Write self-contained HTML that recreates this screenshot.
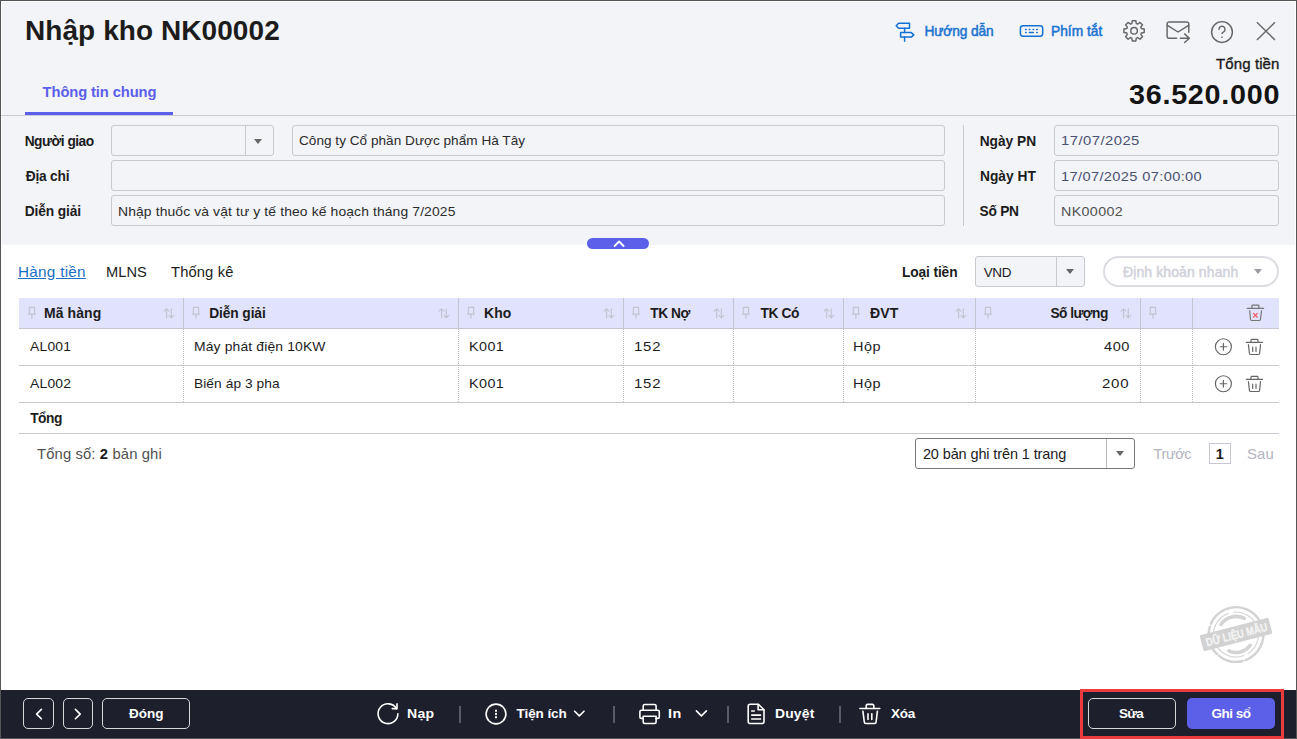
<!DOCTYPE html>
<html><head><meta charset="utf-8">
<style>
*{box-sizing:border-box;margin:0;padding:0}
html,body{width:1297px;height:739px;overflow:hidden;background:#fff}
body{font-family:"Liberation Sans",sans-serif;color:#212121;position:relative}
.a{position:absolute;white-space:nowrap;line-height:1.2}
.s{position:absolute}
#win{position:absolute;left:0;top:0;width:1297px;height:739px;border:1px solid #555;}
#top{position:absolute;left:1px;top:1px;width:1295px;height:244px;background:#f3f4f8}
.inp{position:absolute;border:1px solid #c8c9d1;border-radius:3px;background:#f3f4f8}
.tri{position:absolute;width:0;height:0;border-left:4.5px solid transparent;border-right:4.5px solid transparent;border-top:5.5px solid #666}
.hd{position:absolute;top:298px;height:31px;background:#e1e2fb;border-bottom:1px solid #c6c7cf}
.vs{position:absolute;width:1px;background:#c8c9d1}
.ds{position:absolute;width:0;border-left:1px dotted #bbb}
.hl{position:absolute;height:1px;background:#c8c9d1}
#bar{position:absolute;left:1px;top:690px;width:1295px;height:48px;background:#1e1f2d}
.bb{position:absolute;border:1px solid #d8d8d8;border-radius:5px}
.sep{position:absolute;width:2px;height:17px;top:706px;background:#5a5b66}
svg{position:absolute;overflow:visible}

</style></head><body>
<div id="top"></div>
<div id="win"></div>
<div class="s" style="left:1px;top:1px;width:1295px;height:1px;background:#fff"></div>
<div class="s" style="left:1px;top:1px;width:1px;height:244px;background:#fff"></div>
<div class="s" style="left:1295px;top:1px;width:1px;height:689px;background:#fff"></div>
<div class="s" style="left:25px;top:112px;width:148px;height:3px;background:#5b5fe9"></div>
<div class="s" style="left:1px;top:115px;width:1295px;height:1px;background:#c9cad2"></div>
<!-- form -->
<div class="inp" style="left:111px;top:125px;width:163px;height:31px"></div>
<div class="vs" style="left:245px;top:126px;height:29px"></div>
<div class="tri" style="left:254px;top:139px"></div>
<div class="inp" style="left:292px;top:125px;width:653px;height:31px"></div>
<div class="inp" style="left:111px;top:160px;width:834px;height:31px"></div>
<div class="inp" style="left:111px;top:195px;width:834px;height:31px"></div>
<div class="vs" style="left:963px;top:125px;height:101px"></div>
<div class="inp" style="left:1054px;top:125px;width:225px;height:31px"></div>
<div class="inp" style="left:1054px;top:160px;width:225px;height:31px"></div>
<div class="inp" style="left:1054px;top:195px;width:225px;height:31px"></div>
<div class="s" style="left:587px;top:238px;width:62px;height:11px;background:#5b5fe9;border-radius:5.5px"></div>
<!-- tabs row -->
<div class="inp" style="left:975px;top:256px;width:110px;height:31px"></div>
<div class="vs" style="left:1056px;top:257px;height:29px"></div>
<div class="tri" style="left:1065.5px;top:269px"></div>
<div class="s" style="left:1103px;top:256px;width:176px;height:31px;border:2px solid #dcdde3;border-radius:16px"></div>
<div class="tri" style="left:1253.5px;top:269px;border-top-color:#9c9da3"></div>
<!-- table -->
<div class="hd" style="left:19px;width:1260px"></div>
<div class="vs" style="left:183px;top:298px;height:30px;background:#c4c5d2"></div>
<div class="vs" style="left:458px;top:298px;height:30px;background:#c4c5d2"></div>
<div class="vs" style="left:623px;top:298px;height:30px;background:#c4c5d2"></div>
<div class="vs" style="left:733px;top:298px;height:30px;background:#c4c5d2"></div>
<div class="vs" style="left:843px;top:298px;height:30px;background:#c4c5d2"></div>
<div class="vs" style="left:975px;top:298px;height:30px;background:#c4c5d2"></div>
<div class="vs" style="left:1140px;top:298px;height:30px;background:#c4c5d2"></div>
<div class="vs" style="left:1192px;top:298px;height:30px;background:#c4c5d2"></div>
<div class="hl" style="left:19px;top:365px;width:1260px"></div>
<div class="hl" style="left:19px;top:402px;width:1260px"></div>
<div class="hl" style="left:19px;top:433px;width:1260px"></div>
<div class="ds" style="left:183px;top:329px;height:73px"></div>
<div class="ds" style="left:458px;top:329px;height:73px"></div>
<div class="ds" style="left:623px;top:329px;height:73px"></div>
<div class="ds" style="left:733px;top:329px;height:73px"></div>
<div class="ds" style="left:843px;top:329px;height:73px"></div>
<div class="ds" style="left:975px;top:329px;height:73px"></div>
<div class="ds" style="left:1140px;top:329px;height:73px"></div>
<div class="ds" style="left:1192px;top:329px;height:73px"></div>
<!-- footer -->
<div class="s" style="left:915px;top:438px;width:220px;height:31px;border:1px solid #777;border-radius:3px"></div>
<div class="vs" style="left:1106px;top:439px;height:29px;background:#bbb"></div>
<div class="tri" style="left:1116px;top:451px"></div>
<div class="s" style="left:1209px;top:443px;width:22px;height:21px;border:1px solid #c6c7d3"></div>
<!-- bottom bar -->
<div id="bar"></div>
<div class="bb" style="left:23px;top:698px;width:31px;height:31px"></div>
<div class="bb" style="left:63px;top:698px;width:30px;height:31px"></div>
<div class="bb" style="left:102px;top:698px;width:88px;height:31px"></div>
<div class="sep" style="left:459px"></div>
<div class="sep" style="left:613px"></div>
<div class="sep" style="left:727px"></div>
<div class="sep" style="left:839px"></div>
<div class="s" style="left:1080px;top:689px;width:204px;height:50px;border:3px solid #ec3b3d"></div>
<div class="bb" style="left:1088px;top:698px;width:88px;height:31px"></div>
<div class="s" style="left:1187px;top:698px;width:88px;height:31px;background:#5c5fe8;border-radius:5px"></div>
<!-- ICONS -->
<svg width="1297" height="739" style="left:0;top:0" viewBox="0 0 1297 739" fill="none" stroke-linecap="round" stroke-linejoin="round">
 <!-- signpost -->
 <g stroke="#1272d3" stroke-width="1.5">
  <path d="M898.6 23.3H909.5V28.2H898.6L896.2 25.75Z"/>
  <path d="M904.6 28.2V32.6M904.6 37.1V41.3"/>
  <path d="M900.6 32.6H911.3L913.8 34.85L911.3 37.1H900.6Z"/>
 </g>
 <!-- keyboard -->
 <g stroke="#1272d3">
  <rect x="1020.4" y="25.65" width="22.3" height="10.55" rx="2.6" stroke-width="1.5"/>
  <path d="M1025.6 29.5h0.6M1029.3 29.5h0.6M1033 29.5h0.6M1036.7 29.5h0.6M1025.6 32.5h0.6M1029.3 32.5h4M1036.7 32.5h0.6" stroke-width="1.4"/>
 </g>
 <!-- gear -->
 <g stroke="#666" stroke-width="1.45" transform="translate(1134.06 30.8)">
  <path d="M-2.91 -7.02 L-2.25 -7.26 L-1.74 -10.15 L1.74 -10.15 L2.25 -7.26 L2.91 -7.02 L3.55 -6.72 L5.95 -8.41 L8.41 -5.95 L6.72 -3.55 L7.02 -2.91 L7.26 -2.25 L10.15 -1.74 L10.15 1.74 L7.26 2.25 L7.02 2.91 L6.72 3.55 L8.41 5.95 L5.95 8.41 L3.55 6.72 L2.91 7.02 L2.25 7.26 L1.74 10.15 L-1.74 10.15 L-2.25 7.26 L-2.91 7.02 L-3.55 6.72 L-5.95 8.41 L-8.41 5.95 L-6.72 3.55 L-7.02 2.91 L-7.26 2.25 L-10.15 1.74 L-10.15 -1.74 L-7.26 -2.25 L-7.02 -2.91 L-6.72 -3.55 L-8.41 -5.95 L-5.95 -8.41 L-3.55 -6.72Z"/>
  <circle r="3.3"/>
 </g>
 <!-- mail -->
 <g stroke="#666" stroke-width="1.45">
  <path d="M1188.8 32.3V24A2 2 0 0 0 1186.8 21.9H1169.1A2 2 0 0 0 1167.1 24V36.2A2 2 0 0 0 1169.1 38.2H1176.6"/>
  <path d="M1167.4 25.3L1178 32L1188.6 25.3"/>
  <path d="M1180.3 38.2H1189.4M1184.6 33.9L1189.4 38.2L1184.6 42.5"/>
 </g>
 <!-- help -->
 <g stroke="#666" stroke-width="1.45">
  <circle cx="1222" cy="32" r="10.4"/>
  <path d="M1219 29.3A3 3 0 1 1 1223.6 31.8C1222.6 32.4 1222 32.9 1222 33.6"/>
  <path d="M1221.9 37.3h0.2" stroke-width="1.6"/>
 </g>
 <!-- close -->
 <path d="M1256.9 22.3L1275 40M1275 22.3L1256.9 40" stroke="#6b6b6b" stroke-width="1.5" stroke-linecap="butt"/>
 <!-- collapse chevron -->
 <path d="M614.6 246L619.1 241.5L623.6 246" stroke="#fff" stroke-width="1.8"/>
 <!-- header pins & sorts -->
 <g stroke="#c2c3cf" stroke-width="1.1"><path d="M29.3 313.9V307.9A0.5 0.5 0 0 1 29.8 307.4H34.1 A0.5 0.5 0 0 1 34.6 307.9V313.9M28.5 314.1H35.4M31.9 314.1V318.3"/><path d="M193.3 313.9V307.9A0.5 0.5 0 0 1 193.8 307.4H198.1 A0.5 0.5 0 0 1 198.6 307.9V313.9M192.5 314.1H199.4M196.0 314.1V318.3"/><path d="M468.3 313.9V307.9A0.5 0.5 0 0 1 468.8 307.4H473.1 A0.5 0.5 0 0 1 473.6 307.9V313.9M467.5 314.1H474.4M470.9 314.1V318.3"/><path d="M633.3 313.9V307.9A0.5 0.5 0 0 1 633.8 307.4H638.1 A0.5 0.5 0 0 1 638.6 307.9V313.9M632.5 314.1H639.4M635.9 314.1V318.3"/><path d="M743.3 313.9V307.9A0.5 0.5 0 0 1 743.8 307.4H748.1 A0.5 0.5 0 0 1 748.6 307.9V313.9M742.5 314.1H749.4M745.9 314.1V318.3"/><path d="M853.3 313.9V307.9A0.5 0.5 0 0 1 853.8 307.4H858.1 A0.5 0.5 0 0 1 858.6 307.9V313.9M852.5 314.1H859.4M855.9 314.1V318.3"/><path d="M985.3 313.9V307.9A0.5 0.5 0 0 1 985.8 307.4H990.1 A0.5 0.5 0 0 1 990.6 307.9V313.9M984.5 314.1H991.4M987.9 314.1V318.3"/><path d="M1150.3 313.9V307.9A0.5 0.5 0 0 1 1150.8 307.4H1155.1 A0.5 0.5 0 0 1 1155.6 307.9V313.9M1149.5 314.1H1156.4M1153.0 314.1V318.3"/><path d="M166.6 317.8V308.8M164.2 311.2L166.6 308.8L169.0 311.2M171.3 308.8V317.8M168.9 315.4L171.3 317.8L173.7 315.4"/><path d="M441.6 317.8V308.8M439.2 311.2L441.6 308.8L444.0 311.2M446.3 308.8V317.8M443.9 315.4L446.3 317.8L448.7 315.4"/><path d="M606.6 317.8V308.8M604.2 311.2L606.6 308.8L609.0 311.2M611.3 308.8V317.8M608.9 315.4L611.3 317.8L613.7 315.4"/><path d="M716.6 317.8V308.8M714.2 311.2L716.6 308.8L719.0 311.2M721.3 308.8V317.8M718.9 315.4L721.3 317.8L723.7 315.4"/><path d="M826.6 317.8V308.8M824.2 311.2L826.6 308.8L829.0 311.2M831.3 308.8V317.8M828.9 315.4L831.3 317.8L833.7 315.4"/><path d="M958.6 317.8V308.8M956.2 311.2L958.6 308.8L961.0 311.2M963.3 308.8V317.8M960.9 315.4L963.3 317.8L965.7 315.4"/><path d="M1123.6 317.8V308.8M1121.2 311.2L1123.6 308.8L1126.0 311.2M1128.3 308.8V317.8M1125.9 315.4L1128.3 317.8L1130.7 315.4"/></g>
 <!-- header trash -->
 <g stroke="#777" stroke-width="1.2">
  <path d="M1247.3 308.4H1263.6"/>
  <path d="M1251.9 308.2V306A0.8 0.8 0 0 1 1252.7 305.2H1258.1A0.8 0.8 0 0 1 1258.9 306V308.2"/>
  <path d="M1249.7 310.8L1250.5 319.3A1.2 1.2 0 0 0 1251.7 320.5H1259.3A1.2 1.2 0 0 0 1260.5 319.3L1261.5 310.8"/>
 </g>
 <path d="M1253.2 313.1L1257.6 317.5M1257.6 313.1L1253.2 317.5" stroke="#f2545c" stroke-width="1.15" stroke-linecap="butt"/>
 <!-- row icons -->
 <g stroke="#666" stroke-width="1.2"><circle cx="1223.4" cy="346.75" r="8"/><path d="M1223.4 343.45v6.6M1220.1 346.75h6.6"/><path d="M1246.3 342.4H1262.5M1251 342.3V340.2A0.8 0.8 0 0 1 1251.8 339.4H1257.2A0.8 0.8 0 0 1 1258 340.2V342.3M1248.4 344.6L1249.4 353.3A1.2 1.2 0 0 0 1250.6 354.5H1258.4A1.2 1.2 0 0 0 1259.6 353.3L1260.5 344.6M1252.7 347.2V351.5M1256 347.2V351.5"/><circle cx="1223.4" cy="383.75" r="8"/><path d="M1223.4 380.45v6.6M1220.1 383.75h6.6"/><path d="M1246.3 379.4H1262.5M1251 379.3V377.2A0.8 0.8 0 0 1 1251.8 376.4H1257.2A0.8 0.8 0 0 1 1258 377.2V379.3M1248.4 381.6L1249.4 390.3A1.2 1.2 0 0 0 1250.6 391.5H1258.4A1.2 1.2 0 0 0 1259.6 390.3L1260.5 381.6M1252.7 384.2V388.5M1256 384.2V388.5"/></g>
 <!-- bottom bar icons -->
 <g stroke="#fff" stroke-width="1.6">
  <path d="M41.4 709.4L36.6 714.1L41.4 718.8"/>
  <path d="M75.4 709.4L80.2 714.1L75.4 718.8"/>
  <!-- reload -->
  <path d="M397.9 713.8A9.9 9.9 0 1 1 396.6 708.8"/>
  <path d="M397 703.9V708.6H392.3"/>
  <!-- info -->
  <circle cx="496" cy="714" r="9.9"/>
  <path d="M496 710.6v0.4M496 713.8v0.4M496 717v0.4" stroke-width="2"/>
  <path d="M574.6 711.2L579.3 715.9L584 711.2"/>
  <!-- printer -->
  <path d="M643.2 710.2V706A1.5 1.5 0 0 1 644.7 704.5H654.6A1.5 1.5 0 0 1 656.1 706V710.2"/>
  <path d="M643.2 718.4H641.4A1.5 1.5 0 0 1 639.9 716.9V711.8A1.5 1.5 0 0 1 641.4 710.3H657.8A1.5 1.5 0 0 1 659.3 711.8V716.9A1.5 1.5 0 0 1 657.8 718.4H656.1"/>
  <path d="M643.2 716.3H656.1V722A1.5 1.5 0 0 1 654.6 723.5H644.7A1.5 1.5 0 0 1 643.2 722Z"/>
  <path d="M696.4 710.9L701.4 715.9L706.4 710.9"/>
  <!-- doc -->
  <path d="M758.4 704.3H750.2A2 2 0 0 0 748.2 706.3V721.5A2 2 0 0 0 750.2 723.5H762A2 2 0 0 0 764 721.5V709.8Z"/>
  <path d="M758.1 704.6V709.7H763.8"/>
  <path d="M751.7 711H754.3M751.7 715.1H760.6M751.7 719H760.6"/>
  <!-- trash -->
  <path d="M859.9 708.5H879.8"/>
  <path d="M866.2 708.4V705.8A1.4 1.4 0 0 1 867.6 704.4H872.4A1.4 1.4 0 0 1 873.8 705.8V708.4"/>
  <path d="M862.9 711.2L864.3 722A1.6 1.6 0 0 0 865.9 723.5H874.5A1.6 1.6 0 0 0 876.1 722L877.4 711.2"/>
  <path d="M868 713.8V719.4M871.8 713.8V719.4"/>
 </g>
 <!-- stamp -->
 <g transform="translate(1236 634.5) rotate(-14.5)">
  <circle r="27.3" stroke="#d2d2d2" stroke-width="2.4" stroke-dasharray="40 3 25 2.5 30 3 20 2"/>
  <circle r="22.5" stroke="#d6d6d6" stroke-width="1.2" stroke-dasharray="28 5 36 4 30 6"/>
  <path d="M-12 -13.5A18 18 0 0 1 12 -13.5" stroke="#d4d4d4" stroke-width="3.6"/>
  <path d="M-11 14A17 17 0 0 0 11 14" stroke="#d4d4d4" stroke-width="3.6"/>
  <rect x="-35.5" y="-8.3" width="71" height="16.6" rx="1.5" fill="#d2d2d2" stroke="none"/>
  <text x="-31" y="4.3" textLength="63" lengthAdjust="spacingAndGlyphs" font-family="Liberation Sans" font-weight="bold" font-size="11.5" fill="#f4f4f4" stroke="#f4f4f4" stroke-width="0.3">DỮ LIỆU MẪU</text>
 </g>
</svg>

<div class="a" style="left:24.78px;top:13.95px;font-size:27.75px;letter-spacing:0.087px;transform:scaleX(1.008);transform-origin:0 0;font-weight:bold;color:#1c1c1c">Nhập kho NK00002</div>
<div class="a" style="left:42.60px;top:83.90px;font-size:14.75px;letter-spacing:-0.114px;font-weight:bold;color:#5b5fe9">Thông tin chung</div>
<div class="a" style="left:924.40px;top:24.25px;font-size:13.75px;letter-spacing:-0.125px;font-weight:normal;-webkit-text-stroke-width:0.5px;color:#1a73d0">Hướng dẫn</div>
<div class="a" style="left:1051.00px;top:24.25px;font-size:13.75px;letter-spacing:0.0px;font-weight:normal;-webkit-text-stroke-width:0.5px;color:#1a73d0">Phím tắt</div>
<div class="a" style="left:1216.30px;top:55.95px;font-size:14.75px;letter-spacing:0.093px;transform:scaleX(1.0187);transform-origin:0 0;font-weight:normal;-webkit-text-stroke-width:0.35px;color:#1c1c1c">Tổng tiền</div>
<div class="a" style="left:1129.13px;top:78.70px;font-size:26.75px;letter-spacing:0.679px;transform:scaleX(1.0745);transform-origin:0 0;font-weight:bold;color:#141414">36.520.000</div>
<div class="a" style="left:24.70px;top:133.55px;font-size:13.75px;letter-spacing:-0.5px;font-weight:bold;color:#1c1c1c">Người giao</div>
<div class="a" style="left:25.70px;top:169.25px;font-size:13.75px;letter-spacing:-0.217px;font-weight:bold;color:#1c1c1c">Địa chỉ</div>
<div class="a" style="left:24.70px;top:204.15px;font-size:13.75px;letter-spacing:-0.1px;font-weight:bold;color:#1c1c1c">Diễn giải</div>
<div class="a" style="left:979.70px;top:133.55px;font-size:13.75px;letter-spacing:-0.017px;font-weight:bold;color:#1c1c1c">Ngày PN</div>
<div class="a" style="left:979.50px;top:169.25px;font-size:13.75px;letter-spacing:0.007px;transform:scaleX(1.0011);transform-origin:0 0;font-weight:bold;color:#1c1c1c">Ngày HT</div>
<div class="a" style="left:979.50px;top:204.15px;font-size:13.75px;letter-spacing:-0.25px;font-weight:bold;color:#1c1c1c">Số PN</div>
<div class="a" style="left:298.99px;top:133.25px;font-size:13.5px;letter-spacing:0.026px;transform:scaleX(1.0054);transform-origin:0 0;font-weight:normal;color:#2b2b2b">Công ty Cổ phần Dược phẩm Hà Tây</div>
<div class="a" style="left:117.67px;top:203.75px;font-size:13.5px;letter-spacing:0.117px;transform:scaleX(1.0286);transform-origin:0 0;font-weight:normal;color:#2b2b2b">Nhập thuốc và vật tư y tế theo kế hoạch tháng 7/2025</div>
<div class="a" style="left:1061.10px;top:133.25px;font-size:13.5px;letter-spacing:0.429px;transform:scaleX(1.0964);transform-origin:0 0;font-weight:normal;color:#4a5070">17/07/2025</div>
<div class="a" style="left:1061.12px;top:168.75px;font-size:13.5px;letter-spacing:0.343px;transform:scaleX(1.0821);transform-origin:0 0;font-weight:normal;color:#4a5070">17/07/2025 07:00:00</div>
<div class="a" style="left:1061.14px;top:203.75px;font-size:13.5px;letter-spacing:0.334px;transform:scaleX(1.0578);transform-origin:0 0;font-weight:normal;color:#505050">NK00002</div>
<div class="a" style="left:17.95px;top:264.00px;font-size:14.5px;letter-spacing:0.256px;transform:scaleX(1.054);transform-origin:0 0;font-weight:normal;color:#1a6fc4;text-decoration:underline">Hàng tiền</div>
<div class="a" style="left:106.49px;top:264.00px;font-size:14.5px;letter-spacing:0.066px;transform:scaleX(1.0077);transform-origin:0 0;font-weight:normal;color:#1c1c1c">MLNS</div>
<div class="a" style="left:170.70px;top:264.00px;font-size:14.5px;letter-spacing:0.107px;transform:scaleX(1.019);transform-origin:0 0;font-weight:normal;color:#1c1c1c">Thống kê</div>
<div class="a" style="left:902.00px;top:265.00px;font-size:13.75px;letter-spacing:-0.125px;font-weight:bold;color:#1c1c1c">Loại tiền</div>
<div class="a" style="left:983.70px;top:264.50px;font-size:13.5px;letter-spacing:-0.35px;font-weight:normal;color:#1c1c1c">VND</div>
<div class="a" style="left:1122.80px;top:265.00px;font-size:13.75px;letter-spacing:0.094px;transform:scaleX(1.0195);transform-origin:0 0;font-weight:normal;-webkit-text-stroke-width:0.45px;color:#d0d1d9">Định khoản nhanh</div>
<div class="a" style="left:44.08px;top:305.65px;font-size:13.75px;letter-spacing:0.098px;transform:scaleX(1.0167);transform-origin:0 0;font-weight:bold;color:#1c1c1c">Mã hàng</div>
<div class="a" style="left:209.30px;top:305.65px;font-size:13.75px;letter-spacing:-0.113px;font-weight:bold;color:#1c1c1c">Diễn giải</div>
<div class="a" style="left:484.09px;top:305.65px;font-size:13.75px;letter-spacing:0.099px;transform:scaleX(1.012);transform-origin:0 0;font-weight:bold;color:#1c1c1c">Kho</div>
<div class="a" style="left:650.30px;top:305.65px;font-size:13.75px;letter-spacing:-0.5px;font-weight:bold;color:#1c1c1c">TK Nợ</div>
<div class="a" style="left:760.60px;top:305.65px;font-size:13.75px;letter-spacing:-0.425px;font-weight:bold;color:#1c1c1c">TK Có</div>
<div class="a" style="left:870.10px;top:305.65px;font-size:13.75px;letter-spacing:0.176px;transform:scaleX(1.02);transform-origin:0 0;font-weight:bold;color:#1c1c1c">ĐVT</div>
<div class="a" style="left:1050.40px;top:305.65px;font-size:13.75px;letter-spacing:-0.543px;font-weight:bold;color:#1c1c1c">Số lượng</div>
<div class="a" style="left:30.20px;top:338.75px;font-size:13.5px;letter-spacing:0.185px;transform:scaleX(1.0292);transform-origin:0 0;font-weight:normal;color:#1c1c1c">AL001</div>
<div class="a" style="left:193.97px;top:338.75px;font-size:13.5px;letter-spacing:0.14px;transform:scaleX(1.0295);transform-origin:0 0;font-weight:normal;color:#1c1c1c">Máy phát điện 10KW</div>
<div class="a" style="left:468.84px;top:338.75px;font-size:13.5px;letter-spacing:0.401px;transform:scaleX(1.064);transform-origin:0 0;font-weight:normal;color:#1c1c1c">K001</div>
<div class="a" style="left:633.89px;top:338.75px;font-size:13.5px;letter-spacing:0.685px;transform:scaleX(1.1086);transform-origin:0 0;font-weight:normal;color:#1c1c1c">152</div>
<div class="a" style="left:853.43px;top:338.75px;font-size:13.5px;letter-spacing:0.505px;transform:scaleX(1.0704);transform-origin:0 0;font-weight:normal;color:#1c1c1c">Hộp</div>
<div class="a" style="left:1103.60px;top:338.75px;font-size:13.5px;letter-spacing:0.537px;transform:scaleX(1.0791);transform-origin:0 0;font-weight:normal;color:#1c1c1c">400</div>
<div class="a" style="left:30.20px;top:375.75px;font-size:13.5px;letter-spacing:0.185px;transform:scaleX(1.0292);transform-origin:0 0;font-weight:normal;color:#1c1c1c">AL002</div>
<div class="a" style="left:193.98px;top:375.75px;font-size:13.5px;letter-spacing:0.076px;transform:scaleX(1.0168);transform-origin:0 0;font-weight:normal;color:#1c1c1c">Biến áp 3 pha</div>
<div class="a" style="left:468.84px;top:375.75px;font-size:13.5px;letter-spacing:0.401px;transform:scaleX(1.064);transform-origin:0 0;font-weight:normal;color:#1c1c1c">K001</div>
<div class="a" style="left:633.89px;top:375.75px;font-size:13.5px;letter-spacing:0.685px;transform:scaleX(1.1086);transform-origin:0 0;font-weight:normal;color:#1c1c1c">152</div>
<div class="a" style="left:853.43px;top:375.75px;font-size:13.5px;letter-spacing:0.505px;transform:scaleX(1.0704);transform-origin:0 0;font-weight:normal;color:#1c1c1c">Hộp</div>
<div class="a" style="left:1102.49px;top:375.75px;font-size:13.5px;letter-spacing:0.702px;transform:scaleX(1.1114);transform-origin:0 0;font-weight:normal;color:#1c1c1c">200</div>
<div class="a" style="left:30.20px;top:411.00px;font-size:13.75px;letter-spacing:-0.467px;font-weight:bold;color:#1c1c1c">Tổng</div>
<div class="a" style="left:37.00px;top:446.20px;font-size:14.5px;letter-spacing:0.106px;transform:scaleX(1.0232);transform-origin:0 0;font-weight:normal;color:#505050">Tổng số: <b style="color:#1c1c1c">2</b> bản ghi</div>
<div class="a" style="left:922.90px;top:446.20px;font-size:14.5px;letter-spacing:-0.118px;font-weight:normal;color:#1c1c1c">20 bản ghi trên 1 trang</div>
<div class="a" style="left:1153.50px;top:446.20px;font-size:14.5px;letter-spacing:-0.375px;font-weight:normal;color:#b3b5c0">Trước</div>
<div class="a" style="left:1246.97px;top:446.20px;font-size:14.5px;letter-spacing:0.195px;transform:scaleX(1.025);transform-origin:0 0;font-weight:normal;color:#b3b5c0">Sau</div>
<div class="a" style="left:1215.80px;top:446.20px;font-size:14.5px;letter-spacing:0px;font-weight:bold;color:#1c1c1c">1</div>
<div class="a" style="left:129.00px;top:705.65px;font-size:13.5px;letter-spacing:0.0px;font-weight:bold;color:#ffffff">Đóng</div>
<div class="a" style="left:406.96px;top:705.65px;font-size:13.5px;letter-spacing:0.308px;transform:scaleX(1.04);transform-origin:0 0;font-weight:bold;color:#ffffff">Nạp</div>
<div class="a" style="left:516.60px;top:705.65px;font-size:13.5px;letter-spacing:-0.086px;font-weight:bold;color:#ffffff">Tiện ích</div>
<div class="a" style="left:668.23px;top:705.65px;font-size:13.5px;letter-spacing:0.413px;transform:scaleX(1.066);transform-origin:0 0;font-weight:bold;color:#ffffff">In</div>
<div class="a" style="left:774.97px;top:705.65px;font-size:13.5px;letter-spacing:0.166px;transform:scaleX(1.0283);transform-origin:0 0;font-weight:bold;color:#ffffff">Duyệt</div>
<div class="a" style="left:891.00px;top:705.65px;font-size:13.5px;letter-spacing:-0.2px;font-weight:bold;color:#ffffff">Xóa</div>
<div class="a" style="left:1118.90px;top:705.65px;font-size:13.5px;letter-spacing:-0.75px;font-weight:bold;color:#ffffff">Sửa</div>
<div class="a" style="left:1211.40px;top:705.65px;font-size:13.5px;letter-spacing:-0.46px;font-weight:bold;color:#ffffff">Ghi sổ</div>
</body></html>
